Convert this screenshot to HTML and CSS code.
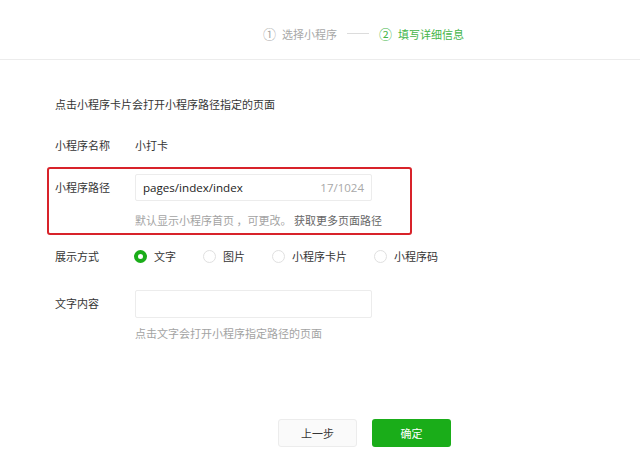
FILE: index.html
```html
<!DOCTYPE html>
<html lang="zh-CN">
<head>
	<meta charset="UTF-8">
	<title>填写详细信息</title>
	<link rel="stylesheet" href="styles.css">
</head>
<body>
	<!-- 步骤条 -->
	<div class="steps">
		<span class="step"><i class="num">①</i>选择小程序</span>
		<span class="step_line"></span>
		<span class="step current"><i class="num">②</i>填写详细信息</span>
	</div>
	<!-- 表单 -->
	<div class="form">
		<p class="intro">点击小程序卡片会打开小程序路径指定的页面</p>
		<div class="row row_name">
			<label class="label">小程序名称</label>
			<div class="value">小打卡</div>
		</div>
		<div class="row row_path">
			<label class="label">小程序路径</label>
			<div class="field">
				<div class="input">
					<span class="input_text">pages/index/index</span>
					<span class="counter">17/1024</span>
				</div>
				<p class="tips">默认显示小程序首页 ，可更改。 <a href="#" class="more">获取更多页面路径</a></p>
			</div>
		</div>
		<div class="row row_mode">
			<label class="label">展示方式</label>
			<div class="radios">
				<span class="radio checked"><i class="dot"></i>文字</span>
				<span class="radio"><i class="dot"></i>图片</span>
				<span class="radio"><i class="dot"></i>小程序卡片</span>
				<span class="radio"><i class="dot"></i>小程序码</span>
			</div>
		</div>
		<div class="row row_text">
			<label class="label">文字内容</label>
			<div class="field">
				<div class="input"></div>
				<p class="tips">点击文字会打开小程序指定路径的页面</p>
			</div>
		</div>
		<div class="btns">
			<a href="#" class="btn btn_default">上一步</a>
			<a href="#" class="btn btn_primary">确定</a>
		</div>
	</div>
</body>
</html>
```

FILE: styles.css
```css
*{
	margin: 0;
	padding: 0;
	box-sizing: border-box;
}
body{
	background: #fff;
	font-family: "Noto Sans CJK SC", sans-serif;
	font-size: 11px;
	color: #353535;
}
i{
	font-style: normal;
}
a{
	text-decoration: none;
}
/* 步骤条 */
.steps{
	height: 60px;
	border-bottom: 1px solid #ececec;
	display: flex;
	align-items: center;
	padding: 8px 0 0 263px;
	color: #a8a8a8;
}
.step{
	display: flex;
	align-items: center;
	line-height: 16px;
}
.step .num{
	font-size: 13px;
	margin-right: 6px;
}
.step.current{
	color: #44b549;
}
.step_line{
	width: 22px;
	height: 1px;
	background: #dcdcdc;
	margin: 0 10px;
}
/* 表单 */
.form{
	padding-left: 55px;
}
.intro{
	margin-top: 36px;
	line-height: 16px;
}
.row{
	display: flex;
	align-items: flex-start;
}
.label{
	width: 80px;
	flex: none;
	line-height: 16px;
}
.row_name{
	margin-top: 25px;
	line-height: 16px;
}
.row_path{
	margin-top: 14px;
	margin-left: -8px;
	width: 365px;
	border: 2px solid #d8232a;
	border-radius: 3px;
	padding: 5px 0 5px 6px;
}
.row_path .label,
.row_text .label{
	line-height: 27px;
}
.input{
	width: 237px;
	height: 27px;
	border: 1px solid #ececec;
	border-radius: 2px;
	display: flex;
	align-items: center;
	justify-content: space-between;
	padding: 0 7px;
}
.input_text{
	font-family: "Open Sans", sans-serif;
	font-size: 11.6px;
	color: #222;
}
.counter{
	font-family: "Open Sans", sans-serif;
	font-size: 11.5px;
	color: #a8a8a8;
}
.tips{
	margin-top: 11px;
	line-height: 16px;
	color: #a3a3a3;
}
.more{
	color: #666;
}
.row_mode{
	margin-top: 13px;
}
.radios{
	display: flex;
	margin-left: -1px;
	line-height: 16px;
}
.radio{
	display: flex;
	align-items: center;
	margin-right: 27px;
}
.radio .dot{
	width: 13px;
	height: 13px;
	border-radius: 50%;
	border: 1px solid #e0e0e0;
	margin-right: 7px;
}
.radio.checked .dot{
	border: 4px solid #1aad19;
}
.row_text{
	margin-top: 26px;
}
.row_text .input{
	height: 28px;
}
.row_text .tips{
	margin-top: 7px;
}
/* 按钮 */
.btns{
	display: flex;
	margin: 78px 0 0 223px;
}
.btn{
	width: 79px;
	height: 28px;
	line-height: 28px;
	text-align: center;
	border-radius: 3px;
	font-size: 11px;
}
.btn_default{
	background: #fafafa;
	border: 1px solid #ececec;
	line-height: 26px;
	color: #353535;
}
.btn_primary{
	margin-left: 15px;
	background: #1aad19;
	color: #fff;
}
```
